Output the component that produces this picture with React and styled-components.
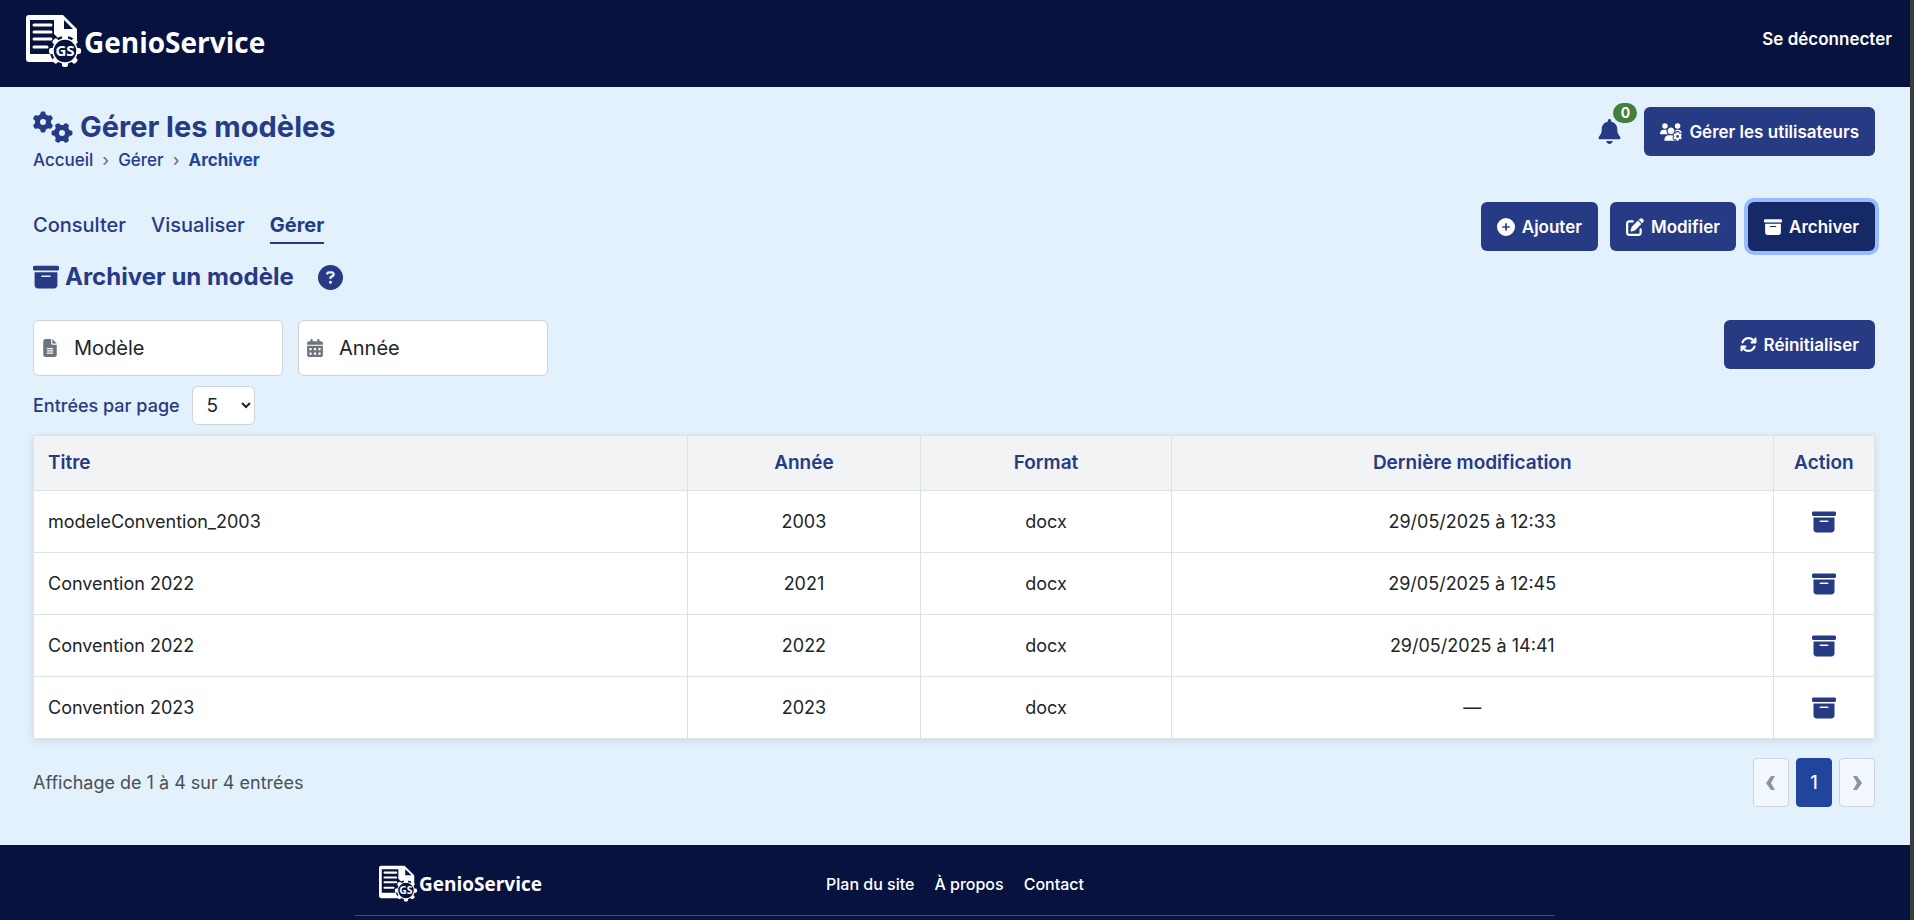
import React from "react";
import styled, { createGlobalStyle } from "styled-components";
import {
  FaGears,
  FaBell,
  FaUsersGear,
  FaCirclePlus,
  FaPenToSquare,
  FaBoxArchive,
  FaCircleQuestion,
  FaArrowsRotate,
  FaFileLines,
  FaCalendarDays,
} from "react-icons/fa6";

const navy = "#07123f";
const blue = "#273a84";
const royal = "#1f469c";

const GlobalStyle = createGlobalStyle`
  *, *::before, *::after { box-sizing: border-box; }
  body {
    margin: 0;
    background: #e3f1fd;
    color: #212529;
    font-family: Inter, "Liberation Sans", sans-serif;
    font-size: 18px;
    line-height: 24px;
  }
  h1, h2, p, ul, ol { margin: 0; padding: 0; }
  ul, ol { list-style: none; }
  a { color: inherit; text-decoration: none; }
  button, input, select { font: inherit; color: inherit; margin: 0; }
  button { cursor: pointer; }
`;

const Page = styled.div`
  display: flex;
  flex-direction: column;
  min-height: 100vh;
  border-right: 4px solid #3a3b3b;
`;

const Header = styled.header`
  display: flex;
  align-items: flex-start;
  justify-content: space-between;
  height: 87px;
  padding: 14px 18px 0 26px;
  background: ${navy};
  color: #fff;
`;

const LogoutLink = styled.a`
  margin-top: 13px;
  font-size: 17px;
  font-weight: 600;
`;

const LogoLink = styled.a`
  display: inline-flex;
  align-items: center;
  gap: ${(p) => (p.$small ? 2 : 3)}px;
  color: #fff;
  font-family: "Open Sans", "Noto Sans", sans-serif;
  font-weight: 700;
  font-size: ${(p) => (p.$small ? 19 : 28)}px;
  line-height: ${(p) => (p.$small ? 36 : 54)}px;
`;

const Main = styled.main`
  flex: 1 0 auto;
  padding: 20px 35px 38px 33px;
`;

const Bar = styled.div`
  display: flex;
  align-items: flex-start;
  justify-content: space-between;
`;

const TitleBar = styled(Bar)`
  height: 95px;
`;

const PageTitle = styled.h1`
  display: flex;
  align-items: center;
  gap: 7px;
  color: ${blue};
  font-size: 29px;
  font-weight: 700;
  line-height: 40px;
`;

const Crumbs = styled.ol`
  display: flex;
  gap: 9px;
  font-size: 17px;
  line-height: 26px;
`;

const Crumb = styled.li`
  display: flex;
  gap: 9px;
  color: ${(p) => (p.$current ? royal : blue)};
  font-weight: ${(p) => (p.$current ? 700 : 500)};
`;

const Separator = styled.span`
  color: #6c757d;
`;

const Actions = styled.div`
  display: flex;
  align-items: center;
  gap: ${(p) => p.$gap || 12}px;
`;

const BellButton = styled.button`
  position: relative;
  display: flex;
  padding: 0;
  border: 0;
  background: none;
  color: ${blue};
`;

const Badge = styled.span`
  position: absolute;
  top: -16px;
  left: 16px;
  width: 24px;
  border-radius: 10px;
  background: #437f3c;
  color: #fff;
  font-size: 14px;
  font-weight: 700;
  line-height: 20px;
  text-align: center;
`;

const Button = styled.button`
  display: inline-flex;
  align-items: center;
  gap: 7px;
  height: 49px;
  padding: 0 16px;
  border: 0;
  border-radius: 6px;
  background: ${(p) => (p.$active ? "#152967" : blue)};
  box-shadow: ${(p) => (p.$active ? "0 0 0 4px #98bbfb" : "none")};
  color: #fff;
  font-size: 17px;
  font-weight: 600;
  white-space: nowrap;
`;

const Tabs = styled.nav`
  display: flex;
  gap: 25px;
  padding-top: 8px;
`;

const Tab = styled.a`
  padding: 3px 0 5px;
  border-bottom: 2px solid ${(p) => (p.$active ? blue : "transparent")};
  color: ${blue};
  font-size: 20px;
  font-weight: ${(p) => (p.$active ? 700 : 500)};
`;

const SectionTitle = styled.div`
  display: flex;
  align-items: center;
  gap: 24px;
  padding: 10px 0 27px;
  color: ${blue};
`;

const Heading = styled.h2`
  display: flex;
  align-items: center;
  gap: 6px;
  font-size: 24px;
  font-weight: 700;
  line-height: 32px;
`;

const HelpButton = styled.button`
  display: flex;
  padding: 0;
  border: 0;
  background: none;
  color: ${blue};
`;

const Filters = styled.div`
  display: flex;
  gap: 15px;
`;

const Field = styled.label`
  display: flex;
  align-items: center;
  width: 250px;
  height: 56px;
  padding: 0 7px;
  border: 1px solid #ced4da;
  border-radius: 6px;
  background: #fff;
  color: #6c757d;
`;

const FieldIcon = styled.span`
  display: flex;
  width: 33px;
`;

const FieldInput = styled.input`
  flex: 1;
  min-width: 0;
  padding: 0;
  border: 0;
  outline: 0;
  background: none;
  font-size: 20px;
  &::placeholder {
    color: #212529;
    opacity: 1;
  }
`;

const PageSize = styled.div`
  display: flex;
  align-items: center;
  gap: 12px;
  padding: 10px 0;
  color: ${blue};
  font-weight: 500;
`;

const SelectBox = styled.span`
  position: relative;
  display: flex;
  svg {
    position: absolute;
    top: 15px;
    right: 4px;
    pointer-events: none;
  }
`;

const Select = styled.select`
  appearance: none;
  width: 63px;
  height: 39px;
  padding: 0 14px;
  border: 1px solid #ced4da;
  border-radius: 6px;
  background: #fff;
  color: #212529;
  font-size: 19px;
  font-weight: 400;
`;

const Table = styled.table`
  width: 100%;
  table-layout: fixed;
  border-collapse: collapse;
  background: #fff;
  box-shadow: 0 2px 8px rgba(0, 0, 0, 0.1);
`;

const Col = styled.col`
  width: ${(p) => p.$width};
`;

const Th = styled.th`
  height: 55px;
  padding: 0 14px;
  border: 1px solid #dee2e6;
  background: #f1f3f5;
  color: ${blue};
  font-size: 19px;
  font-weight: 600;
  text-align: ${(p) => (p.$left ? "left" : "center")};
`;

const Td = styled.td`
  height: 62px;
  padding: 0 14px;
  border: 1px solid #dee2e6;
  text-align: ${(p) => (p.$left ? "left" : "center")};
`;

const RowButton = styled.button`
  display: inline-flex;
  padding: 0;
  border: 0;
  background: none;
  color: ${blue};
  vertical-align: middle;
`;

const TableFooter = styled.div`
  display: flex;
  align-items: center;
  justify-content: space-between;
  padding-top: 19px;
  color: #495057;
`;

const Pagination = styled.nav`
  display: flex;
  gap: 7px;
`;

const PageButton = styled.button`
  display: flex;
  align-items: center;
  justify-content: center;
  width: 36px;
  height: 49px;
  padding: 0;
  border: 1px solid ${(p) => (p.$current ? royal : "#ced4da")};
  border-radius: 4px;
  background: ${(p) => (p.$current ? royal : "#f3f7fe")};
  color: ${(p) => (p.$current ? "#fff" : "#8d959c")};
  font-weight: 500;
`;

const Footer = styled.footer`
  height: 75px;
  background: ${navy};
  color: #fff;
`;

const FooterInner = styled.div`
  display: grid;
  grid-template-columns: 1fr auto 1fr;
  align-items: center;
  max-width: 1200px;
  height: 71px;
  margin: 0 auto;
  padding: 7px 24px 0;
  border-bottom: 1px solid #444c6e;
`;

const FooterLinks = styled.nav`
  display: flex;
  gap: 20px;
  font-size: 16px;
  font-weight: 500;
`;

const gearTeeth = [0, 45, 90, 135, 180, 225, 270, 315];

function LogoMark({ size }) {
  return (
    <svg width={size} height={size} viewBox="0 0 55 55" aria-hidden="true">
      <path d="M3 1h34l14 14v20H38v13H3a3 3 0 0 1-3-3V4a3 3 0 0 1 3-3z" fill="#fff" />
      <path d="M4 6h24v14l4 4-5 4-2 12H4z" fill={navy} />
      <path d="M38 6v9h9z" fill={navy} />
      <path d="M8 11h17M8 18h17M8 25h17M8 33h13" stroke="#fff" strokeWidth="3" strokeLinecap="round" />
      <circle cx="39" cy="37" r="15" fill={navy} />
      <g fill="#fff">
        {gearTeeth.map((a) => (
          <rect key={a} x="36" y="21" width="6" height="6" rx="2" transform={`rotate(${a} 39 37)`} />
        ))}
      </g>
      <circle cx="39" cy="37" r="12" fill={navy} stroke="#fff" strokeWidth="1.5" />
      <text x="39" y="42" textAnchor="middle" fill="#fff" fontFamily="Open Sans, sans-serif" fontWeight="700" fontSize="15">
        GS
      </text>
    </svg>
  );
}

function Logo({ small }) {
  return (
    <LogoLink href="#" $small={small}>
      <LogoMark size={small ? 38 : 55} />
      GenioService
    </LogoLink>
  );
}

function Chevron({ left }) {
  return (
    <svg width="10" height="14" viewBox="0 0 10 14" fill="currentColor" aria-hidden="true">
      <path d={left ? "M5 0h4L5 7l4 7H5L0 7z" : "M5 0H1l4 7-4 7h4l5-7z"} />
    </svg>
  );
}

const rows = [
  ["modeleConvention_2003", "2003", "docx", "29/05/2025 à 12:33"],
  ["Convention 2022", "2021", "docx", "29/05/2025 à 12:45"],
  ["Convention 2022", "2022", "docx", "29/05/2025 à 14:41"],
  ["Convention 2023", "2023", "docx", "—"],
];

const columns = [
  ["Titre", "35.5%"],
  ["Année", "12.7%"],
  ["Format", "13.6%"],
  ["Dernière modification", "32.7%"],
  ["Action", "5.5%"],
];

export default function App() {
  return (
    <Page>
      <GlobalStyle />
      <Header>
        <Logo />
        <LogoutLink href="#">Se déconnecter</LogoutLink>
      </Header>

      <Main>
        <TitleBar>
          <div>
            <PageTitle>
              <FaGears size={40} />
              Gérer les modèles
            </PageTitle>
            <Crumbs>
              <Crumb><a href="#">Accueil</a><Separator>›</Separator></Crumb>
              <Crumb><a href="#">Gérer</a><Separator>›</Separator></Crumb>
              <Crumb $current aria-current="page">Archiver</Crumb>
            </Crumbs>
          </div>
          <Actions $gap={22}>
            <BellButton aria-label="Notifications">
              <FaBell size={25} />
              <Badge>0</Badge>
            </BellButton>
            <Button><FaUsersGear size={22} />Gérer les utilisateurs</Button>
          </Actions>
        </TitleBar>

        <Bar>
          <Tabs>
            <Tab href="#">Consulter</Tab>
            <Tab href="#">Visualiser</Tab>
            <Tab href="#" $active>Gérer</Tab>
          </Tabs>
          <Actions>
            <Button><FaCirclePlus size={18} />Ajouter</Button>
            <Button><FaPenToSquare size={18} />Modifier</Button>
            <Button $active><FaBoxArchive size={18} />Archiver</Button>
          </Actions>
        </Bar>

        <SectionTitle>
          <Heading><FaBoxArchive size={26} />Archiver un modèle</Heading>
          <HelpButton aria-label="Aide"><FaCircleQuestion size={25} /></HelpButton>
        </SectionTitle>

        <Bar>
          <Filters>
            <Field>
              <FieldIcon><FaFileLines size={18} /></FieldIcon>
              <FieldInput placeholder="Modèle" aria-label="Modèle" />
            </Field>
            <Field>
              <FieldIcon><FaCalendarDays size={18} /></FieldIcon>
              <FieldInput placeholder="Année" aria-label="Année" />
            </Field>
          </Filters>
          <Button><FaArrowsRotate size={17} />Réinitialiser</Button>
        </Bar>

        <PageSize>
          <label htmlFor="page-size">Entrées par page</label>
          <SelectBox>
            <Select id="page-size" defaultValue="5">
              <option>5</option>
              <option>10</option>
              <option>25</option>
            </Select>
            <svg width="10" height="8" viewBox="0 0 10 8" fill="none" stroke="#212529" strokeWidth="2" aria-hidden="true">
              <path d="M1 2l4 4 4-4" />
            </svg>
          </SelectBox>
        </PageSize>

        <Table>
          <colgroup>
            {columns.map(([name, width]) => <Col key={name} $width={width} />)}
          </colgroup>
          <thead>
            <tr>
              {columns.map(([name], i) => <Th key={name} $left={i === 0}>{name}</Th>)}
            </tr>
          </thead>
          <tbody>
            {rows.map((row) => (
              <tr key={row[1]}>
                {row.map((cell, i) => <Td key={i} $left={i === 0}>{cell}</Td>)}
                <Td>
                  <RowButton aria-label={`Archiver ${row[0]}`}><FaBoxArchive size={24} /></RowButton>
                </Td>
              </tr>
            ))}
          </tbody>
        </Table>

        <TableFooter>
          <p>Affichage de 1 à 4 sur 4 entrées</p>
          <Pagination aria-label="Pagination">
            <PageButton aria-label="Précédent"><Chevron left /></PageButton>
            <PageButton $current>1</PageButton>
            <PageButton aria-label="Suivant"><Chevron /></PageButton>
          </Pagination>
        </TableFooter>
      </Main>

      <Footer>
        <FooterInner>
          <Logo small />
          <FooterLinks>
            <a href="#">Plan du site</a>
            <a href="#">À propos</a>
            <a href="#">Contact</a>
          </FooterLinks>
        </FooterInner>
      </Footer>
    </Page>
  );
}
